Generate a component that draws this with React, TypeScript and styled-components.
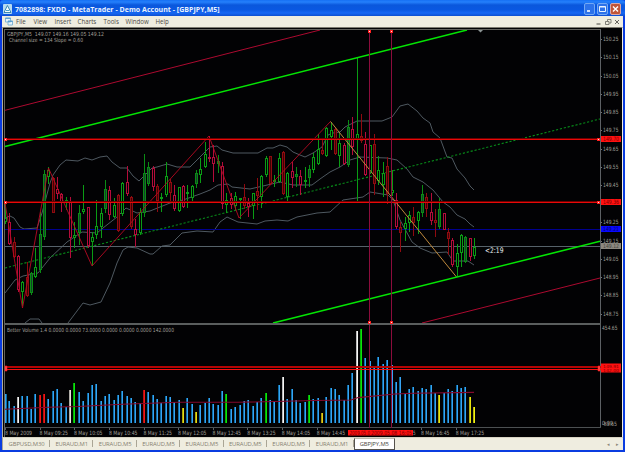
import styled, { createGlobalStyle } from "styled-components";

const GlobalStyle = createGlobalStyle`
  body {
    margin: 0;
    background: #0831d9;
    overflow: hidden;
  }
`;

const Window = styled.div`
  display: flex;
  flex-direction: column;
  box-sizing: border-box;
  width: 625px;
  height: 452px;
  padding: 0 2px 2px;
  background: #0a3ce0;
  font-family: "Open Sans", "Liberation Sans", sans-serif;
`;

const TitleBar = styled.header`
  display: flex;
  align-items: center;
  height: 16px;
  margin: 0 -2px;
  padding: 0 4px 0 3px;
  box-sizing: border-box;
  border-radius: 3px 3px 0 0;
  background: linear-gradient(#1670f4 0, #2580fc 2px, #0a57dc 5px, #0a58e2 10px, #1567f4 13px, #0c4ed0 16px);

  svg {
    flex: none;
    margin-top: 2px;
  }
`;

const Title = styled.h1`
  flex: 1;
  margin: 3px 0 0 3px;
  font-size: 7px;
  line-height: 10px;
  font-weight: 700;
  letter-spacing: 0.03px;
  color: #e8f2ff;
  white-space: pre;
`;

const Buttons = styled.div`
  display: flex;
  gap: 2px;
  margin-top: 2px;
`;

const WindowButton = styled.span<{ $close?: boolean }>`
  display: flex;
  width: 11px;
  height: 12px;
  box-sizing: border-box;
  border: 1px solid ${(props) => (props.$close ? "#d8a8a8" : "#72a8f4")};
  border-radius: 2px;
  background: ${(props) => (props.$close ? "#c05538" : "#2c72ea")};

  svg {
    margin: 0;
  }
`;

const MenuBar = styled.nav`
  display: flex;
  align-items: center;
  height: 11px;
  flex: none;
  background: #efede0;
  padding: 0 3px;
`;

const MenuItem = styled.span<{ $width: number }>`
  width: ${(props) => props.$width}px;
  font-size: 6.2px;
  line-height: 10px;
  color: #4c4a46;
`;

const MenuSpacer = styled.span`
  flex: 1;
`;

const Workspace = styled.main`
  display: flex;
  flex-direction: column;
  height: 410px;
  flex: none;
  box-sizing: border-box;
  background: #020204;
  border-top: 1px solid #7c7a70;
  border-left: 1px solid #b0ac9c;
  border-right: 1px solid #f0eee4;

  svg {
    display: block;
  }
`;

const TabBar = styled.footer`
  display: flex;
  height: 13px;
  flex: none;
  box-sizing: border-box;
  padding-right: 4px;
  border-top: 1px solid #d8d4c4;
  background: #efede0;
  border-left: 1px solid #aaa698;
`;

const Tab = styled.span<{ $active?: boolean; $first?: boolean }>`
  display: flex;
  align-items: center;
  justify-content: center;
  position: relative;
  width: ${(props) => (props.$active ? 41 : props.$first ? 47 : 43.4)}px;
  box-sizing: border-box;
  height: 12px;
  font-size: 5.9px;
  letter-spacing: -0.12px;
  color: ${(props) => (props.$active ? "#4a4742" : "#857f70")};
  background: ${(props) => (props.$active ? "#fff" : "none")};
  border: ${(props) => (props.$active ? "1px solid #55524c" : "0")};
  border-top-color: #c0bcb0;

  &::after {
    content: "";
    position: absolute;
    right: 0;
    top: 2px;
    height: 7px;
    border-right: 1px solid ${(props) => (props.$active ? "transparent" : "#aaa595")};
  }
`;

const TabArrows = styled.span`
  margin-left: auto;
  display: flex;
  align-items: center;
  gap: 6px;
  font-size: 5px;
  color: #8d887a;
`;

// candle: high, body top, body bottom, low, kind
// g = up, f = up with tinted body, r = down, d = down muted
type Candle = [number, number, number, number, "g" | "f" | "r" | "d"];

const candles: Candle[] = [
  [203, 218, 222, 224, "g"], [213, 222, 244, 245, "r"], [237, 242, 257, 258, "d"], [255, 256, 290, 292, "r"],
  [281, 282, 292, 306, "g"], [262, 277, 296, 297, "d"], [272, 273, 293, 295, "f"], [248, 267, 277, 278, "g"],
  [212, 234, 270, 273, "f"], [170, 174, 237, 240, "f"], [167, 170, 177, 184, "g"], [177, 178, 213, 213, "d"],
  [177, 189, 194, 199, "r"], [193, 194, 202, 212, "r"], [197, 200, 201, 210, "f"], [197, 201, 238, 258, "r"],
  [222, 235, 238, 248, "g"], [205, 213, 233, 245, "f"], [185, 209, 212, 214, "g"], [207, 207, 246, 248, "r"],
  [232, 237, 242, 266, "g"], [200, 226, 235, 239, "g"], [208, 213, 227, 238, "g"], [180, 189, 209, 213, "f"],
  [186, 190, 215, 220, "r"], [198, 205, 217, 218, "g"], [194, 195, 231, 232, "d"], [182, 183, 214, 216, "g"],
  [166, 182, 194, 196, "r"], [196, 197, 227, 229, "d"], [219, 229, 235, 247, "r"], [208, 212, 233, 235, "g"],
  [154, 173, 213, 217, "f"], [162, 167, 184, 186, "f"], [166, 168, 187, 191, "r"], [184, 186, 201, 212, "d"],
  [193, 197, 199, 212, "g"], [162, 176, 195, 197, "g"], [179, 182, 193, 201, "d"], [185, 195, 209, 211, "r"],
  [187, 187, 211, 212, "g"], [185, 186, 207, 208, "r"], [185, 192, 193, 208, "g"], [185, 186, 198, 202, "g"],
  [170, 173, 184, 188, "f"], [158, 169, 175, 183, "g"], [142, 154, 167, 168, "g"], [136, 157, 159, 162, "r"],
  [145, 157, 164, 182, "r"], [155, 161, 164, 173, "f"], [162, 166, 204, 209, "r"], [193, 200, 205, 213, "g"],
  [193, 198, 205, 209, "r"], [192, 196, 206, 210, "g"], [198, 198, 199, 219, "g"], [184, 197, 206, 209, "d"],
  [198, 203, 207, 217, "r"], [193, 193, 206, 219, "g"], [178, 191, 196, 210, "d"], [175, 176, 197, 208, "g"],
  [156, 158, 175, 177, "g"], [156, 156, 184, 185, "d"], [175, 180, 182, 187, "g"], [153, 158, 182, 183, "g"],
  [151, 152, 194, 195, "d"], [172, 173, 197, 203, "g"], [162, 171, 178, 188, "r"], [167, 174, 177, 187, "f"],
  [170, 176, 185, 195, "r"], [167, 180, 182, 188, "g"], [165, 169, 178, 187, "f"], [153, 157, 170, 173, "g"],
  [134, 149, 164, 165, "g"], [140, 150, 154, 155, "d"], [127, 128, 156, 157, "g"], [122, 130, 137, 150, "g"],
  [128, 129, 154, 155, "d"], [133, 143, 156, 167, "g"], [143, 145, 164, 165, "r"], [120, 127, 165, 167, "f"],
  [117, 129, 147, 155, "r"], [58, 134, 139, 202, "g"], [114, 136, 141, 143, "d"], [132, 144, 175, 176, "r"],
  [145, 145, 173, 174, "g"], [134, 144, 184, 195, "d"], [156, 170, 181, 185, "g"], [162, 173, 185, 197, "g"],
  [157, 166, 194, 204, "d"], [170, 190, 193, 196, "g"], [193, 200, 227, 229, "r"], [222, 227, 233, 252, "d"],
  [217, 223, 229, 241, "g"], [211, 215, 223, 232, "g"], [207, 217, 223, 236, "d"], [211, 212, 221, 234, "g"],
  [185, 194, 213, 217, "f"], [193, 197, 209, 217, "d"], [193, 212, 221, 225, "r"], [209, 220, 223, 237, "d"],
  [198, 209, 227, 229, "f"], [213, 213, 230, 230, "r"], [228, 232, 239, 255, "d"], [238, 240, 265, 267, "r"],
  [244, 253, 267, 276, "g"], [234, 235, 253, 267, "g"], [236, 237, 262, 263, "f"], [238, 238, 257, 261, "r"],
  [238, 247, 256, 259, "g"],
];

const candleColors = {
  g: { line: "#0a9c14", fill: "#020204" },
  f: { line: "#0a8c14", fill: "#14402c" },
  r: { line: "#b40c3a", fill: "#020204" },
  d: { line: "#900a10", fill: "#3c0404" },
};

// bar tops of the volume pane
const volumes = [
  394, 401, 406, 396.7, 396, 396, 408.7, 394, 394.7, 394, 399.3, 390.7, 389, 402.7, 407, 390, 383, 391.7, 401,
  393, 384.7, 384, 401, 396, 394, 400, 395, 391, 396, 398.3, 402.3, 403.3, 390, 391.7, 395, 399, 403.3, 396, 397,
  402.3, 400, 408, 398, 403.7, 412, 405, 403.3, 398, 404, 405.3, 390.7, 394.3, 409, 406.7, 404.7, 401, 400.3, 406,
  402, 398.3, 393, 400.3, 402, 385, 377.3, 399, 389, 400, 403, 402, 395.3, 399, 398.3, 413.3, 396.7, 388.3, 389,
  395.3, 400, 384.7, 372.7, 331, 329.3, 358, 361.3, 368.3, 357, 364, 360.3, 365.3, 382.3, 377.3, 394.3, 389.3,
  387, 391, 388.3, 389.3, 385.3, 393, 395.3, 393.3, 389, 390.7, 384.7, 388.3, 387.3, 397, 407,
];

const volumeMarks: Record<number, string> = {
  3: "#f4f4f4", 8: "#f41414", 9: "#f41414", 15: "#e8e4dc", 16: "#08e808", 32: "#f41414", 41: "#e4dc10",
  44: "#e4dc10", 51: "#08e808", 60: "#08e808", 64: "#f4f4f4", 70: "#08e808", 73: "#e4cc10", 81: "#f8f8f8",
  82: "#08e808", 100: "#e8e810", 107: "#e8e410", 108: "#f0f010",
};

const bands = [
  "5,218 10,216 14,218 20,227 24,229 37,228 42,213 50,183 53,175 60,165 66,160 78,161 85,158 92,160 100,157 107,156 112,162 120,168 127,168 133,176 139,181 145,175 152,168 157,167 167,164 177,167 190,167 200,157 210,147 217,146 222,150 233,153 258,153 267,148 273,148 280,145 287,147 293,152 300,155 305,157 313,153 322,147 328,135 333,133 340,132 345,127 357,121 382,121 392,117 400,106 408,104 417,111 423,118 430,123 433,132 440,138 447,157 452,158 457,169 465,178 470,186 474,190",
  "5,293 15,280 23,276 38,273 50,258 67,242 82,232 97,233 103,228 117,217 126,208 137,213 150,211 170,203 183,200 200,194 210,190 218,185 228,184 232,187 250,189 263,186 280,182 293,185 312,185 320,179 330,172 340,167 350,160 360,157 387,158 397,160 407,169 413,177 423,182 433,190 443,202 450,207 457,215 465,219 470,224 474,227",
  "25,323 30,319 39,319 42,323",
  "68,323 83,303 90,305 101,302 110,283 117,263 123,250 128,247 137,248 150,254 153,254 162,246 170,245 182,233 197,231 213,232 220,222 227,217 238,222 257,224 265,221 277,220 288,221 297,217 317,213 330,212 343,200 363,197 370,192 388,195 393,200 400,220 412,242 420,248 432,253 447,252 453,261 468,261 474,265",
];

const prices: [string, number][] = [
  ["150.25", 39], ["150.15", 57.3], ["150.05", 75.7], ["149.95", 94], ["149.85", 112], ["149.75", 130.3],
  ["149.65", 149], ["149.55", 167], ["149.45", 185.3], ["149.25", 222.3], ["149.15", 240.5], ["149.05", 258.5],
  ["148.95", 277], ["148.85", 295.3], ["148.75", 313.7],
];

const priceTags = [
  { text: "149.70", y: 139, back: "#ff1010", ink: "#7c0000" },
  { text: "149.36", y: 202, back: "#ff1010", ink: "#7c0000" },
  { text: "149.21", y: 229, back: "#0808ff", ink: "#000078" },
  { text: "149.12", y: 246, back: "#8c8880", ink: "#48463f" },
];

const times: [string, number][] = [
  ["8 May 2009", 5], ["8 May 09:25", 39.5], ["8 May 10:05", 74], ["8 May 10:45", 109], ["8 May 11:25", 143.5],
  ["8 May 12:05", 178], ["8 May 12:45", 212.5], ["8 May 13:25", 247.2], ["8 May 14:05", 281.8],
  ["8 May 14:45", 316.7], ["8 May 16:45", 421], ["8 May 17:25", 455.7],
];

const tabs = ["GBPUSD,M30", "EURAUD,M1", "EURAUD,M5", "EURAUD,M5", "EURAUD,M5", "EURAUD,M5", "EURAUD,M5", "EURAUD,M1"];

const menu: [string, number][] = [
  ["File", 17.5], ["View", 21], ["Insert", 23], ["Charts", 26], ["Tools", 22], ["Window", 30], ["Help", 20],
];

const barX = (i: number) => Math.round(5 + i * 4.343);

interface ILabelProps {
  x: number;
  y: number;
  width: number;
  children: string;
  fill?: string;
  size?: number;
}

// y is the vertical middle of the digits
const Label = ({ x, y, width, children, fill = "#a09f98", size = 5.8 }: ILabelProps) => (
  <text
    x={x}
    y={y + size * 0.36}
    fill={fill}
    fontSize={size}
    fontFamily='"DejaVu Sans", sans-serif'
    textLength={width}
    lengthAdjust="spacingAndGlyphs"
    xmlSpace="preserve"
  >
    {children}
  </text>
);

const Handle = ({ x, y }: { x: number; y: number }) => (
  <g shapeRendering="crispEdges">
    <rect x={x - 1} y={y - 1} width="3" height="3" fill="#ff2020" />
    <rect x={x} y={y} width="1" height="1" fill="#ffe8e8" />
  </g>
);

const PricePane = () => (
  <svg width="619" height="295" viewBox="3 28 619 295">
    <g fill="none" stroke="#4e5860" strokeWidth="1">
      {bands.map((points) => (
        <polyline key={points} points={points} />
      ))}
    </g>
    <g shapeRendering="crispEdges">
      <rect x="5" y="229" width="595" height="1" fill="#000090" />
      <rect x="5" y="246" width="595" height="1" fill="#56626a" />
    </g>
    <path d="M5 110.3L320 30M422 323L600 278" stroke="#ac0a30" strokeWidth="1" />
    <path d="M5 268L600 119" stroke="#088c1a" strokeWidth="1.1" strokeDasharray="2.2 1.8" />
    <g shapeRendering="crispEdges">
      {candles.map(([high, top, bottom, low, kind], i) => {
        const { line, fill } = candleColors[kind];
        return (
          <g key={i}>
            <rect x={barX(i)} y={high} width="1" height={low - high} fill={line} />
            <rect
              x={barX(i) - 0.5}
              y={top + 0.5}
              width="2"
              height={Math.max(1, bottom - top - 1)}
              fill={fill}
              stroke={line}
            />
          </g>
        );
      })}
    </g>
    <path
      d="M5 203L22.5 308L48.5 168L92 266L209 136L239 218L330.5 121.5"
      fill="none"
      stroke="#b80a22"
      strokeWidth="0.9"
    />
    <path d="M330.5 121.5L456.5 277" stroke="#c08a3c" strokeWidth="1" />
    <path d="M5 146.5L467 30M273 323L600 241.3" stroke="#04e404" strokeWidth="1.6" />
    <g shapeRendering="crispEdges">
      <rect x="5" y="138" width="595" height="1" fill="#6c0000" />
      <rect x="5" y="139" width="595" height="1" fill="#e80808" />
      <rect x="5" y="201" width="595" height="1" fill="#6c0000" />
      <rect x="5" y="202" width="595" height="1" fill="#e80808" />
      <rect x="369" y="31" width="1" height="292" fill="#8c0c3c" />
      <rect x="391" y="31" width="1" height="292" fill="#8c0c3c" />
      <rect x="4" y="29" width="597" height="1" fill="#62625e" />
      <rect x="4" y="29" width="1" height="294" fill="#62625e" />
      <rect x="600" y="29" width="1" height="294" fill="#5c6064" />
      {prices.map(([text, y]) => (
        <rect key={text} x="601" y={Math.round(y)} width="1" height="1" fill="#707474" />
      ))}
    </g>
    <Handle x={369} y={31} />
    <Handle x={391} y={31} />
    <Handle x={369} y={322} />
    <Handle x={391} y={322} />
    <Handle x={5} y={139} />
    <Handle x={5} y={202} />
    <Handle x={598} y={139} />
    <Handle x={598} y={202} />
    <path d="M478 30H483L480.5 32.6Z" fill="#8c9494" />
    <Label x={7} y={34} width={97} size={5.6}>GBPJPY,M5  149.07 149.16 149.05 149.12</Label>
    <Label x={9} y={39.5} width={74} size={5.6}>Channel size = 134 Slope = 0.60</Label>
    <Label x={485} y={250.3} width={18.5} size={7.6} fill="#f0f0f0">{"<2:19"}</Label>
    {prices.map(([text, y]) => (
      <Label key={text} x={603} y={y} width={15.5}>{text}</Label>
    ))}
    {priceTags.map(({ text, y, back, ink }) => (
      <g key={text}>
        <rect x="601" y={y - 3} width="20" height="6" fill={back} />
        <Label x={603} y={y} width={16} fill={ink}>{text}</Label>
      </g>
    ))}
  </svg>
);

const VolumePane = () => (
  <svg width="619" height="114" viewBox="3 323 619 114">
    <g shapeRendering="crispEdges">
      <rect x="4" y="323" width="597" height="2" fill="#5a5e5e" />
      <rect x="4" y="325" width="1" height="112" fill="#62625e" />
      <rect x="600" y="325" width="1" height="103" fill="#5c6064" />
      <rect x="5" y="427" width="596" height="1" fill="#4c5052" />
      {volumes.map((top, i) => (
        <g key={i}>
          <rect x={barX(i)} y={Math.round(top)} width="1" height={423 - Math.round(top)} fill={volumeMarks[i] ?? "#38a4f4"} />
          <rect
            x={i ? barX(i) - 1 : 6}
            y={Math.round(top)}
            width="1"
            height={423 - Math.round(top)}
            fill={volumeMarks[i] ?? "#0c6ca4"}
            opacity={volumeMarks[i] ? 0.75 : 1}
          />
        </g>
      ))}
      <rect x="369" y="325" width="1" height="103" fill="#8c0c3c" />
      <rect x="391" y="325" width="1" height="103" fill="#8c0c3c" />
      <rect x="5" y="366" width="596" height="2" fill="#b40404" />
      <rect x="5" y="369" width="596" height="1" fill="#f81010" />
      {times.map(([text, x]) => (
        <rect key={text} x={Math.round(x)} y="428" width="1" height="2" fill="#5c6064" />
      ))}
    </g>
    <polyline
      points="5,409.3 48,407.3 78,406.5 122,404.3 178,402.3 238,402.3 315,400.5 351,400 358,397.6 395,394 413,393.3 474,392.4"
      fill="none"
      stroke="#84082c"
      strokeWidth="1.1"
    />
    <path d="M5 366h2v5h-2zM598 366h2v5h-2z" fill="#ff5050" stroke="#ff1010" strokeWidth="0.6" />
    <Handle x={369} y={322} />
    <Handle x={391} y={322} />
    <Label x={7} y={330} width={167} size={5.6}>
      Better Volume 1.4 0.0000 0.0000 73.0000 0.0000 0.0000 0.0000 142.0000
    </Label>
    <Label x={602} y={328.3} width={15.5}>454.65</Label>
    <Label x={602} y={422.6} width={11}>0.00</Label>
    <Label x={602} y={424} width={15}>-83.65</Label>
    <rect x="601" y="363.5" width="20" height="9" fill="#ff1010" />
    <Label x={603} y={366} width={16} size={4.2} fill="#7c0000">149.91</Label>
    <Label x={603} y={370.2} width={16} size={4.2} fill="#7c0000">142.00</Label>
    {times.map(([text, x]) => (
      <Label key={text} x={x} y={433} width={text === "8 May 2009" ? 27 : 28.5}>{text}</Label>
    ))}
    <rect x="348" y="430" width="65" height="5.5" fill="#ff1010" />
    <Label x={349.5} y={433} width={20.5} fill="#7c0000">2009.05.0</Label>
    <Label x={371} y={433} width={41} fill="#7c0000">2009.05.08 16:05</Label>
    <Label x={413} y={433} width={2.6}>5</Label>
  </svg>
);

export default function App() {
  return (
    <Window>
      <GlobalStyle />
      <TitleBar>
        <svg width="9" height="10" viewBox="0 0 9 10">
          <rect width="9" height="10" rx="1" fill="#b8dcf0" />
          <path d="M1 8.5L4.4 1.5L8 8.5Z" fill="#f8ffff" stroke="#287cae" strokeWidth="0.9" />
          <path d="M3 6.5H6" stroke="#48a0c4" />
        </svg>
        <Title>7082898: FXDD - MetaTrader - Demo Account - [GBPJPY,M5]</Title>
        <Buttons>
          <WindowButton>
            <svg width="9" height="10">
              <path d="M2 7H5" stroke="#fff" strokeWidth="1.6" />
            </svg>
          </WindowButton>
          <WindowButton>
            <svg width="9" height="10">
              <path d="M1.5 2.5H7.5V7.5H1.5ZM1.5 3H7.5" fill="none" stroke="#e8f2ff" />
            </svg>
          </WindowButton>
          <WindowButton $close>
            <svg width="9" height="10">
              <path d="M2 2.5L7 7.5M7 2.5L2 7.5" stroke="#fff" strokeWidth="1.4" />
            </svg>
          </WindowButton>
        </Buttons>
      </TitleBar>
      <MenuBar>
        <svg width="11" height="9" viewBox="0 0 11 9">
          <path d="M0.5 1H5.5V5H0.5ZM3 4H7.5V8H3Z" fill="#e8f4fc" stroke="#78b0d4" strokeWidth="0.9" />
          <path d="M0.5 1.3H5.5M3 4.3H7.5" stroke="#4c96cc" />
        </svg>
        {menu.map(([name, width]) => (
          <MenuItem key={name} $width={width}>{name}</MenuItem>
        ))}
        <MenuSpacer />
        <svg width="25" height="8" viewBox="0 0 25 8" fill="none" stroke="#66645e">
          <path d="M1.5 6H5.5" strokeWidth="1.2" />
          <path d="M12.5 3V1.5H16V5H14.5M10.5 3.5H14V6.5H10.5Z" strokeWidth="0.8" />
          <path d="M20 2L24 6M24 2L20 6" />
        </svg>
      </MenuBar>
      <Workspace>
        <PricePane />
        <VolumePane />
      </Workspace>
      <TabBar>
        {tabs.map((name, i) => (
          <Tab key={i} $first={i === 0}>{name}</Tab>
        ))}
        <Tab $active>GBPJPY,M5</Tab>
        <TabArrows>
          <span>◂</span>
          <span>▸</span>
        </TabArrows>
      </TabBar>
    </Window>
  );
}
